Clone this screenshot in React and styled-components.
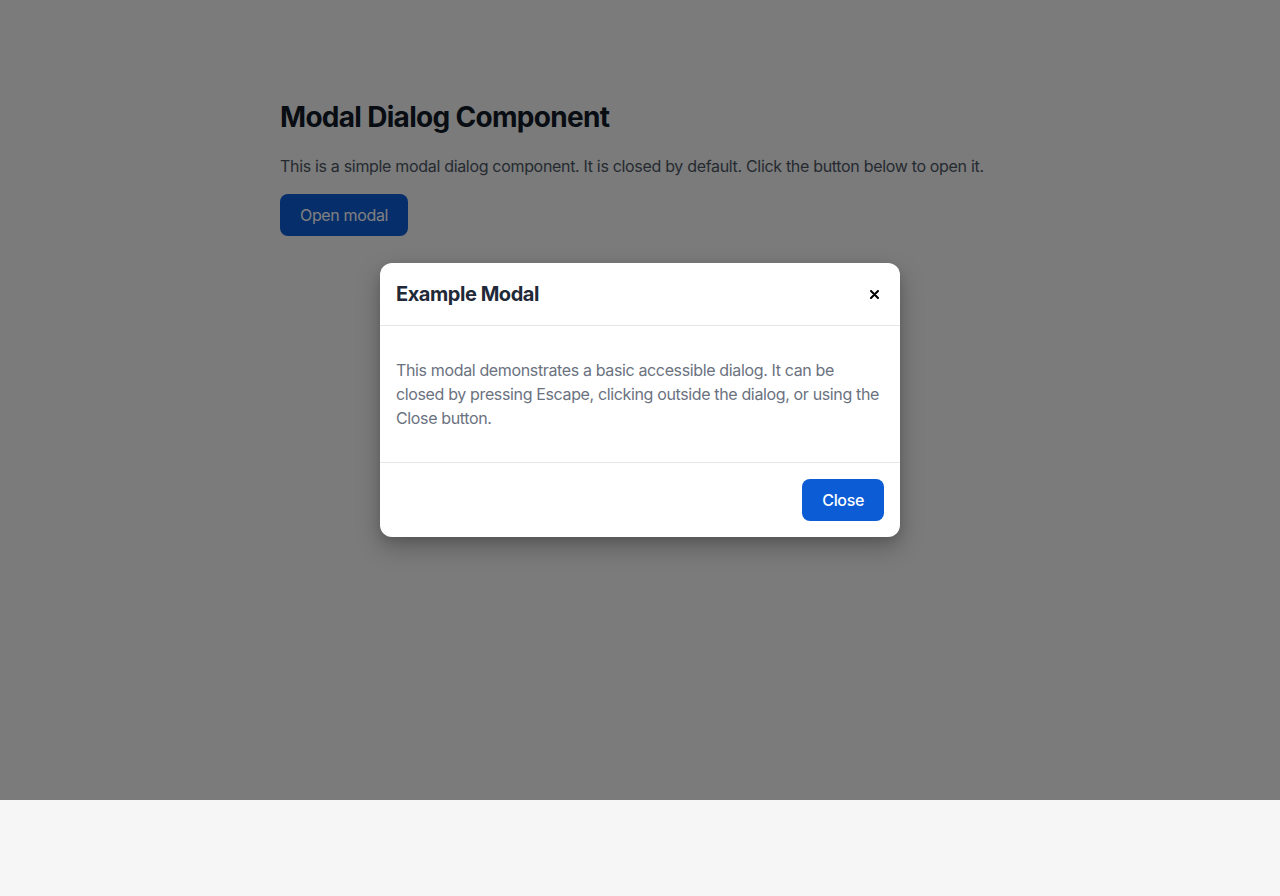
import React from "react";
import styled, { createGlobalStyle } from "styled-components";

const Global = createGlobalStyle`
  html, body { margin: 0; padding: 0; background: #f6f6f6; }
  body { font-family: Inter, "Noto Sans", "Liberation Sans", sans-serif; -webkit-font-smoothing: antialiased; }
  * { box-sizing: border-box; }
`;

const Page = styled.div`
  position: relative;
  min-height: 800px;
`;

const Main = styled.main`
  max-width: 720px;
  margin: 0 auto;
  padding-top: 100px;
`;

const Title = styled.h1`
  margin: 0 0 20px;
  font-size: 28px;
  line-height: 34px;
  font-weight: 700;
  color: #111827;
  letter-spacing: -0.7px;
`;

const Lead = styled.p`
  margin: 0 0 16px;
  font-size: 16px;
  line-height: 24px;
  color: #4b5563;
  letter-spacing: -0.32px;
`;

const Button = styled.button`
  height: 42px;
  padding: 0 20px;
  border: none;
  border-radius: 8px;
  background: #0b5cd5;
  color: #fff;
  font-family: inherit;
  font-size: 16px;
  font-weight: ${(p) => (p.$medium ? 500 : 400)};
  letter-spacing: -0.35px;
  cursor: pointer;
`;

const Overlay = styled.div`
  position: absolute;
  inset: 0;
  background: rgba(0, 0, 0, 0.5);
  display: flex;
  align-items: center;
  justify-content: center;
`;

const Dialog = styled.div`
  width: 520px;
  background: #fff;
  border-radius: 12px;
  box-shadow: 0 10px 25px rgba(0, 0, 0, 0.25), 0 4px 10px rgba(0, 0, 0, 0.1);
  overflow: hidden;
`;

const Header = styled.div`
  display: flex;
  align-items: center;
  justify-content: space-between;
  padding: 16px;
  border-bottom: 1px solid #e5e7eb;
`;

const DialogTitle = styled.h2`
  margin: 0;
  font-size: 20px;
  line-height: 30px;
  font-weight: 700;
  color: #1f2937;
  letter-spacing: -0.45px;
`;

const CloseX = styled.button`
  width: 20px;
  height: 24px;
  padding: 0;
  border: none;
  background: transparent;
  display: flex;
  align-items: center;
  justify-content: center;
  cursor: pointer;
  color: #000;
`;

const Body = styled.div`
  padding: 32px 16px;
  border-bottom: 1px solid #e5e7eb;
`;

const BodyText = styled.p`
  margin: 0;
  font-size: 16px;
  line-height: 24px;
  color: #6b7280;
  letter-spacing: -0.36px;
`;

const Footer = styled.div`
  display: flex;
  justify-content: flex-end;
  padding: 16px;
`;

export default function App() {
  return (
    <>
      <Global />
      <Page>
        <Main>
          <Title>Modal Dialog Component</Title>
          <Lead>
            This is a simple modal dialog component. It is closed by default. Click the button below to open it.
          </Lead>
          <Button>Open modal</Button>
        </Main>
        <Overlay>
          <Dialog role="dialog" aria-modal="true">
            <Header>
              <DialogTitle>Example Modal</DialogTitle>
              <CloseX aria-label="Close">
                <svg width="9" height="9" viewBox="0 0 9 9">
                  <path d="M1 1L8 8M8 1L1 8" stroke="currentColor" strokeWidth="2" strokeLinecap="round" />
                </svg>
              </CloseX>
            </Header>
            <Body>
              <BodyText>
                This modal demonstrates a basic accessible dialog. It can be closed by pressing Escape, clicking outside the dialog, or using the Close button.
              </BodyText>
            </Body>
            <Footer>
              <Button $medium>Close</Button>
            </Footer>
          </Dialog>
        </Overlay>
      </Page>
    </>
  );
}
